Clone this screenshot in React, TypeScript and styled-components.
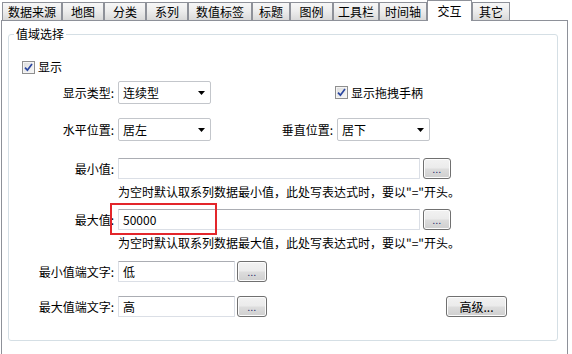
import React from "react";
import styled, { createGlobalStyle } from "styled-components";

const Global = createGlobalStyle`
  html, body { margin: 0; padding: 0; background: #ffffff; }
  body {
    font-family: "Noto Sans CJK SC", "Liberation Sans", sans-serif;
    font-size: 12px;
    color: #000;
  }
`;

const Screen = styled.div`
  width: 572px;
  height: 354px;
  overflow: hidden;
  background: #fff;
`;

const TabBar = styled.div`
  display: flex;
  align-items: flex-start;
  height: 20px;
  padding-left: 2px;
`;

const Tab = styled.div<{ $w: number; $active?: boolean }>`
  box-sizing: border-box;
  width: ${(p) => p.$w}px;
  height: ${(p) => (p.$active ? 21 : 18)}px;
  margin-top: ${(p) => (p.$active ? 0 : 2)}px;
  border: 1px solid #8e9199;
  border-bottom: none;
  background: ${(p) =>
    p.$active ? "#ffffff" : "linear-gradient(#f7f7f7, #ececec 50%, #d9d9d9)"};
  position: relative;
  z-index: ${(p) => (p.$active ? 2 : 0)};
  display: flex;
  justify-content: center;
  align-items: flex-start;
  padding-top: ${(p) => (p.$active ? 2 : 1)}px;
  font-size: 12px;
  line-height: 15px;
  white-space: nowrap;
`;

const Panel = styled.div`
  box-sizing: border-box;
  margin-left: 1px;
  width: 567px;
  height: 340px;
  border: 1px solid #8e9199;
  padding-left: 6px;
  padding-top: 13px;
`;

const GroupBox = styled.div`
  box-sizing: border-box;
  position: relative;
  width: 550px;
  height: 307px;
  border: 1px solid #d5dfe5;
  border-radius: 3px;
  padding: 23px 0 0 13px;
`;

const Legend = styled.span`
  position: absolute;
  top: -9px;
  left: 5px;
  padding: 0 2px;
  background: #fff;
  line-height: 16px;
`;

const Row = styled.div<{ $mt: number; $h: number }>`
  display: flex;
  align-items: center;
  margin-top: ${(p) => p.$mt}px;
  height: ${(p) => p.$h}px;
  position: relative;
`;

const Label = styled.div<{ $w?: number; $ml?: number }>`
  width: ${(p) => p.$w ?? 92}px;
  margin-left: ${(p) => p.$ml ?? 0}px;
  margin-right: 4px;
  text-align: right;
  white-space: nowrap;
  line-height: 16px;
  flex-shrink: 0;
`;

const CheckWrap = styled.label<{ $ml?: number }>`
  display: flex;
  align-items: center;
  margin-left: ${(p) => p.$ml ?? 0}px;
  line-height: 16px;
  white-space: nowrap;
`;

const CheckBox = styled.span`
  box-sizing: border-box;
  width: 13px;
  height: 13px;
  border: 1px solid #8f8f8f;
  background: linear-gradient(135deg, #dcdcdc, #f8f8f8);
  box-shadow: inset 0 0 0 1px #f4f4f4;
  display: flex;
  align-items: center;
  justify-content: center;
  margin-right: 3px;
`;

const Select = styled.div<{ $w: number }>`
  box-sizing: border-box;
  width: ${(p) => p.$w}px;
  height: 23px;
  border: 1px solid #c3c6cb;
  border-radius: 2px;
  background: #fff;
  display: flex;
  align-items: center;
  justify-content: space-between;
  padding: 0 5px 0 4px;
  line-height: 16px;
  flex-shrink: 0;
`;

const Input = styled.div<{ $w: number }>`
  box-sizing: border-box;
  width: ${(p) => p.$w}px;
  height: 21px;
  border: 1px solid #dbdfe6;
  border-top-color: #abadb3;
  border-radius: 1px;
  background: #fff;
  display: flex;
  align-items: center;
  padding-left: 4px;
  line-height: 16px;
  flex-shrink: 0;
`;

const Button = styled.div<{ $w: number; $ml: number }>`
  box-sizing: border-box;
  width: ${(p) => p.$w}px;
  height: 21px;
  margin-left: ${(p) => p.$ml}px;
  border: 1px solid #707070;
  border-radius: 3px;
  background: linear-gradient(#f2f2f2, #ebebeb 48%, #dddddd 52%, #cfcfcf);
  box-shadow: inset 0 0 0 1px #fcfcfc;
  display: flex;
  align-items: center;
  justify-content: center;
  line-height: 16px;
  flex-shrink: 0;
`;

const Dots = styled.span`
  font-size: 9px;
  letter-spacing: 0.5px;
  color: #2a2a6a;
  margin-top: 2px;
`;

const Hint = styled.div`
  margin-left: 96px;
  line-height: 16px;
  white-space: nowrap;
  flex-shrink: 0;
`;

const Highlight = styled.div`
  position: absolute;
  left: 88px;
  top: -6px;
  width: 107px;
  height: 32px;
  box-sizing: border-box;
  border: 2px solid #e3262b;
  pointer-events: none;
`;

const Check = () => (
  <CheckBox>
    <svg width="9" height="9" viewBox="0 0 9 9">
      <path d="M1 4.6 L3.4 7.2 L8 1" fill="none" stroke="#2a46a0" strokeWidth="1.7" />
    </svg>
  </CheckBox>
);

const Arrow = () => (
  <svg width="7" height="4" viewBox="0 0 7 4">
    <polygon points="0,0 7,0 3.5,4" fill="#000" />
  </svg>
);

const tabs: [string, number][] = [
  ["数据来源", 60],
  ["地图", 42],
  ["分类", 42],
  ["系列", 42],
  ["数值标签", 64],
  ["标题", 38],
  ["图例", 43],
  ["工具栏", 46],
  ["时间轴", 48],
  ["交互", 45],
  ["其它", 38],
];

const hintTail = "此处写表达式时，要以\"=\"开头。";

export default function App() {
  return (
    <Screen>
      <Global />
      <TabBar>
        {tabs.map(([t, w]) => (
          <Tab key={t} $w={w} $active={t === "交互"}>
            {t}
          </Tab>
        ))}
      </TabBar>
      <Panel>
        <GroupBox>
          <Legend>值域选择</Legend>
          <Row $mt={0} $h={18}>
            <CheckWrap>
              <Check />
              显示
            </CheckWrap>
          </Row>
          <Row $mt={5} $h={23}>
            <Label>显示类型:</Label>
            <Select $w={93}>
              连续型
              <Arrow />
            </Select>
            <CheckWrap $ml={124}>
              <Check />
              显示拖拽手柄
            </CheckWrap>
          </Row>
          <Row $mt={14} $h={23}>
            <Label>水平位置:</Label>
            <Select $w={93}>
              居左
              <Arrow />
            </Select>
            <Label $w={60} $ml={62}>
              垂直位置:
            </Label>
            <Select $w={93}>
              居下
              <Arrow />
            </Select>
          </Row>
          <Row $mt={17} $h={21}>
            <Label>最小值:</Label>
            <Input $w={302} />
            <Button $w={28} $ml={3}>
              <Dots>...</Dots>
            </Button>
          </Row>
          <Row $mt={5} $h={16}>
            <Hint>为空时默认取系列数据最小值，{hintTail}</Hint>
          </Row>
          <Row $mt={9} $h={21}>
            <Label>最大值:</Label>
            <Input $w={302}>50000</Input>
            <Button $w={28} $ml={3}>
              <Dots>...</Dots>
            </Button>
            <Highlight />
          </Row>
          <Row $mt={5} $h={16}>
            <Hint>为空时默认取系列数据最大值，{hintTail}</Hint>
          </Row>
          <Row $mt={10} $h={21}>
            <Label>最小值端文字:</Label>
            <Input $w={117}>低</Input>
            <Button $w={30} $ml={2}>
              <Dots>...</Dots>
            </Button>
          </Row>
          <Row $mt={14} $h={21}>
            <Label>最大值端文字:</Label>
            <Input $w={117}>高</Input>
            <Button $w={30} $ml={2}>
              <Dots>...</Dots>
            </Button>
            <Button $w={61} $ml={179}>
              高级...
            </Button>
          </Row>
        </GroupBox>
      </Panel>
    </Screen>
  );
}
